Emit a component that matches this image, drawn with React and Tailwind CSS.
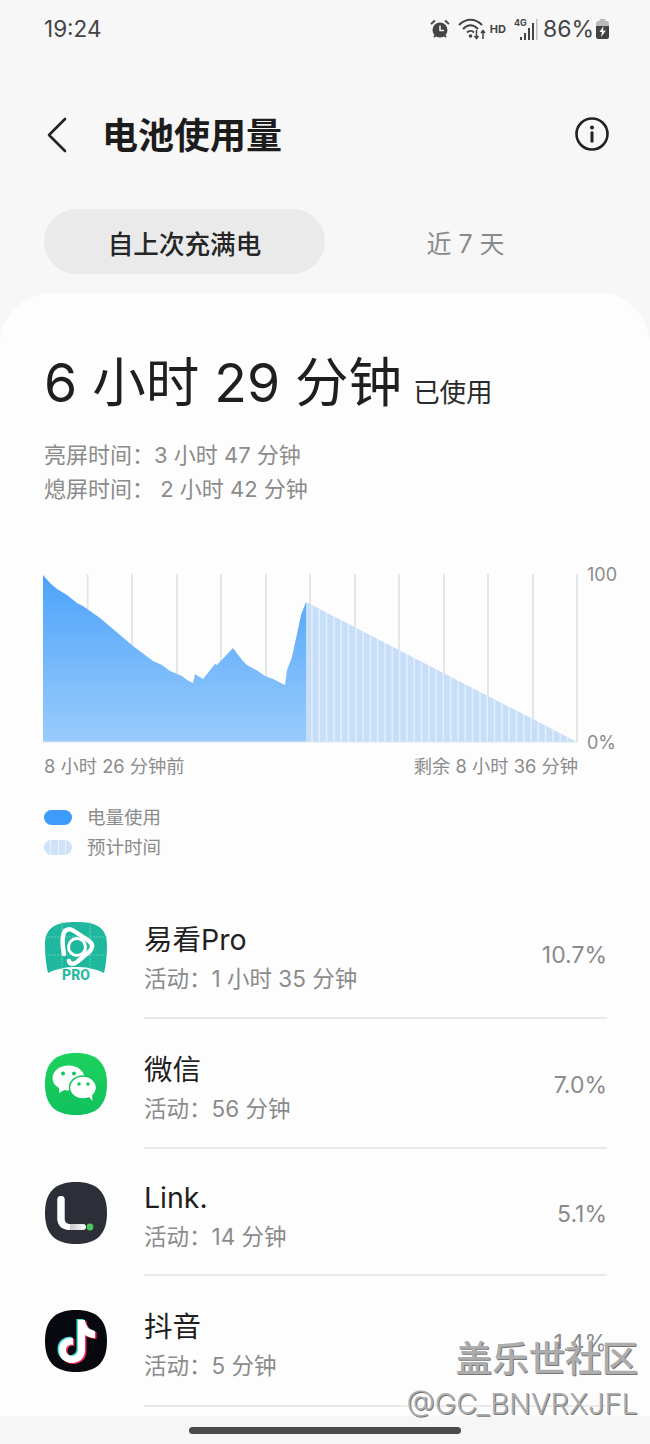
import React from "react";

const font = "font-['Inter','Noto_Sans_CJK_SC',sans-serif]";

const usedPoints =
  "43,742 43,575 50,583 57,589 67,595 77,603 83,606 100,618 133,646 153,661 162,665 170,671 182,676 187,680 193,683 195,674 203,679 215,664 217,665 233,648 242,660 247,665 258,671 265,676 273,679 285,685 287,670 292,657 301,615 306,602 306,742";

const gridXs = [87.5, 132, 177, 221, 266, 310, 355, 399, 444, 488, 533, 577];
const stripeXs = Array.from({ length: 37 }, (_, i) => 312 + i * 7.3);

const Chart = () => (
  <svg width="536" height="170" viewBox="42 573 536 170" className="block shrink-0">
    <defs>
      <linearGradient id="used" x1="0" y1="0" x2="0" y2="1">
        <stop offset="0" stopColor="#4da3fb" />
        <stop offset="1" stopColor="#9accfc" />
      </linearGradient>
      <clipPath id="forecast">
        <polygon points="306,602 577,742 306,742" />
      </clipPath>
    </defs>
    {gridXs.map((x) => (
      <line key={x} x1={x} x2={x} y1="574" y2="742" stroke="#e6e6e6" strokeWidth="2" />
    ))}
    <polygon points="306,602 577,742 306,742" fill="#c4dcf9" fillOpacity="0.95" />
    <g clipPath="url(#forecast)">
      {stripeXs.map((x) => (
        <line key={x} x1={x} x2={x} y1="600" y2="742" stroke="#e2eefc" strokeWidth="1.6" />
      ))}
    </g>
    <polygon points={usedPoints} fill="url(#used)" />
    <line x1="43" x2="577" y1="742" y2="742" stroke="#dbe8f6" strokeWidth="1" />
  </svg>
);

const Squircle = ({ fill }) => (
  <path d="M32 1C53 1 63 11 63 32C63 53 53 63 32 63C11 63 1 53 1 32C1 11 11 1 32 1Z" fill={fill} />
);

const YikanIcon = () => (
  <svg width="64" height="64" viewBox="0 0 64 64">
    <path d="M32 1C52 1 63 6 63 24C63 34 62 44 60 52C50 47 41 46 32 46C23 46 14 47 4 52C2 44 1 34 1 24C1 6 12 1 32 1Z" fill="#1fb89e" />
    <path d="M1 16H63M1 34H63M18 1V48M46 1V48" stroke="#5fd0bc" strokeWidth="1" strokeDasharray="2 1" fill="none" />
    <path d="M21 10C24 7 27 8 30 10L45 20C49 23 49 27 46 30L33 41C29 44 26 43 25 40" fill="none" stroke="#fff" strokeWidth="4.5" strokeLinecap="round" />
    <path d="M21 10C18 14 18 24 20 33" fill="none" stroke="#fff" strokeWidth="4.5" strokeLinecap="round" />
    <circle cx="33" cy="26" r="8.5" fill="none" stroke="#fff" strokeWidth="3" />
    <path d="M30 21L39 26L30 31Z" fill="#1fb89e" />
    <text x="32" y="59" textAnchor="middle" fontSize="14" fontWeight="800" fill="#25b9a0" fontFamily="Roboto, sans-serif">PRO</text>
  </svg>
);

const WechatIcon = () => (
  <svg width="64" height="64" viewBox="0 0 64 64">
    <defs>
      <linearGradient id="wx" x1="0" y1="0" x2="0" y2="1">
        <stop offset="0" stopColor="#1dd25f" />
        <stop offset="1" stopColor="#0fc15b" />
      </linearGradient>
    </defs>
    <Squircle fill="url(#wx)" />
    <ellipse cx="24.500" cy="26" rx="16" ry="12.500" fill="#fff" />
    <path d="M15 34L15 41L22 37Z" fill="#fff" />
    <ellipse cx="39" cy="35.500" rx="13.500" ry="11.500" fill="#fff" stroke="#14c75c" strokeWidth="1.500" />
    <path d="M44 44L48.500 49L48 41Z" fill="#fff" />
    <circle cx="19" cy="21.500" r="2" fill="#14c75c" />
    <circle cx="30" cy="21.500" r="2" fill="#14c75c" />
    <circle cx="35" cy="32" r="1.800" fill="#14c75c" />
    <circle cx="44" cy="32" r="1.800" fill="#14c75c" />
  </svg>
);

const LinkIcon = () => (
  <svg width="64" height="64" viewBox="0 0 64 64">
    <defs>
      <linearGradient id="lk" x1="0" y1="0" x2="1" y2="0">
        <stop offset="0" stopColor="#f4f4f4" />
        <stop offset="0.45" stopColor="#c9c9c9" />
        <stop offset="1" stopColor="#ffffff" />
      </linearGradient>
    </defs>
    <Squircle fill="#2c2f38" />
    <path d="M17 15C19 15 20.500 16 20.500 18V38C20.500 41 23 43 26 43H39C41 43 42 44 42 46C42 48 41 49 39 49H26C19 49 13.500 45 13.500 38V18C13.500 16 15 15 17 15Z" fill="url(#lk)" />
    <path d="M13.500 18C13.500 16 15 15 17 15C19 15 20.500 16 20.500 18V38C20.500 41 23 43 26 43V49C19 49 13.500 45 13.500 38Z" fill="#fff" />
    <circle cx="46" cy="46" r="3.400" fill="#4cc65d" />
  </svg>
);

const DouyinIcon = () => {
  const note = "M34 11H41C41.5 17 45 21 51 22V29C46 29 43 27.5 41 26V41C41 49 35 54 28 54C20 54 15 48 15 41C15 33 22 28 29 29V36C25 35 22 37.5 22 41C22 44.5 25 47 28 47C31.500 47 34 44.500 34 41Z";
  return (
    <svg width="64" height="64" viewBox="0 0 64 64">
      <Squircle fill="#08090f" />
      <path d={note} fill="#3fe3e0" transform="translate(-1.500 -1)" />
      <path d={note} fill="#f4305a" transform="translate(1.500 1)" />
      <path d={note} fill="#fff" />
    </svg>
  );
};

const apps = [
  { name: "易看Pro", use: "活动：1 小时 35 分钟", pct: "10.7%", icon: <YikanIcon />, h: "h-[130px]", top: "pt-[32px]" },
  { name: "微信", use: "活动：56 分钟", pct: "7.0%", icon: <WechatIcon />, h: "h-[130px]", top: "pt-[33px]" },
  { name: "Link.", use: "活动：14 分钟", pct: "5.1%", icon: <LinkIcon />, h: "h-[127px]", top: "pt-[32px]" },
  { name: "抖音", use: "活动：5 分钟", pct: "1.4%", icon: <DouyinIcon />, h: "h-[131px]", top: "pt-[33px]" },
];

const AppRow = ({ app }) => (
  <div className={`flex pl-[44px] pr-[43px] ${app.h}`}>
    <div className={`w-[100px] shrink-0 ${app.top}`}>{app.icon}</div>
    <div className="flex flex-1 items-center justify-between border-b-2 border-[#e9e9e9] pt-[11px]">
      <div className="flex flex-col">
        <span className="text-[28.500px] leading-[39px] text-[#1f1f1f]">{app.name}</span>
        <span className="text-[22.500px] leading-[39px] text-[#8b8b8b]">{app.use}</span>
      </div>
      <span className="mb-[6px] text-[23px] text-[#8b8b8b]">{app.pct}</span>
    </div>
  </div>
);

const StatusIcons = () => (
  <div className="flex items-center text-[#444]">
    <svg width="20" height="20" viewBox="0 0 20 20" className="mr-[8px]">
      <circle cx="10" cy="11" r="7.500" fill="#444" />
      <path d="M10 6.500V11.500H14" stroke="#f7f7f7" strokeWidth="1.500" fill="none" />
      <path d="M1 5L5 1.500M19 5L15 1.500M4 18L5.500 16.500M16 18L14.500 16.500" stroke="#444" strokeWidth="1.800" />
    </svg>
    <svg width="28" height="22" viewBox="0 0 28 22" fill="none" className="mr-[4px]">
      <path d="M1 7C8 0 17 0 24 7" stroke="#444" strokeWidth="2" />
      <path d="M5 11C10 6 15 6 20 11" stroke="#444" strokeWidth="2" />
      <path d="M9 14.500C11 12.500 14 12.500 16 14.500" stroke="#444" strokeWidth="2" />
      <circle cx="12.500" cy="18" r="1.800" fill="#444" />
      <path d="M18.500 12V20M16.500 18L18.500 20.500L20.500 18M25 21V13M23 15L25 12.500L27 15" stroke="#444" strokeWidth="1.500" />
    </svg>
    <span className="mr-[8px] text-[11px] font-bold leading-none text-[#444]">HD</span>
    <div className="relative mr-[5px] h-[24px] w-[24px]">
      <span className="absolute left-0 top-[1px] text-[9px] font-bold leading-none text-[#444]">4G</span>
      <svg width="24" height="24" viewBox="0 0 24 24" className="absolute left-0 top-0">
        <rect x="6" y="20" width="2" height="3" fill="#444" />
        <rect x="10" y="16" width="2" height="7" fill="#444" />
        <rect x="14" y="11" width="2" height="12" fill="#444" />
        <rect x="18" y="6" width="2" height="17" fill="#444" />
        <rect x="22" y="2" width="1.500" height="21" fill="#bdbdbd" />
      </svg>
    </div>
    <span className="mr-[2px] text-[23px] leading-none text-[#444]">86%</span>
    <svg width="13" height="20" viewBox="0 0 13 20">
      <rect x="3.500" y="0" width="6" height="3" fill="#bbb" />
      <path d="M0 4C0 3 1 2 2 2H11C12 2 13 3 13 4V7H0Z" fill="#bbb" />
      <path d="M0 7H13V18C13 19 12 20 11 20H2C1 20 0 19 0 18Z" fill="#444" />
      <path d="M7.500 7L3.500 13H6L5 18L10 11.500H7Z" fill="#f7f7f7" />
    </svg>
  </div>
);

export default function App() {
  return (
    <div className={`relative h-[1444px] w-[650px] overflow-hidden bg-[#f7f7f7] ${font}`}>
      {/* status bar */}
      <div className="flex h-[58px] items-center justify-between pl-[44px] pr-[41px]">
        <span className="text-[22.500px] leading-none text-[#444]">19:24</span>
        <StatusIcons />
      </div>

      {/* header */}
      <div className="flex h-[151px] items-start pl-[47px] pr-[41px] pt-[59px]">
        <svg width="20" height="36" viewBox="0 0 20 36" fill="none" className="shrink-0">
          <path d="M18 2L2 18L18 34" stroke="#222" strokeWidth="2.600" strokeLinecap="round" strokeLinejoin="round" />
        </svg>
        <h1 className="ml-[35px] flex-1 text-[36px] font-semibold leading-[38px] text-[#1c1c1c]">电池使用量</h1>
        <svg width="34" height="34" viewBox="0 0 34 34" fill="none" className="shrink-0">
          <circle cx="17" cy="17" r="15.500" stroke="#222" strokeWidth="2.600" />
          <circle cx="17" cy="10.500" r="2" fill="#222" />
          <rect x="15.500" y="14.500" width="3" height="11" rx="0.500" fill="#222" />
        </svg>
      </div>

      {/* tabs */}
      <div className="flex h-[65px] pl-[44px] pr-[44px]">
        <div className="flex w-[281px] items-center justify-center rounded-full bg-[#eaeaea] pt-[7px] text-[25.600px] font-medium text-[#262626]">
          自上次充满电
        </div>
        <div className="flex flex-1 items-center justify-center pt-[7px] text-[25px] text-[#8a8a8a]">近 7 天</div>
      </div>

      {/* card */}
      <div className="mt-[19px] h-[1123px] rounded-t-[52px] bg-[#fdfdfd]">
        <div className="flex items-baseline pl-[44px] pt-[52px]">
          <span className="text-[53.500px] leading-[76px] text-[#1f1f1f]">6 小时 29 分钟</span>
          <span className="ml-[11px] text-[26.500px] text-[#2b2b2b]">已使用</span>
        </div>
        <div className="mt-[17px] pl-[44px] text-[22px] leading-[34px] text-[#8b8b8b]">
          <div>亮屏时间：3 小时 47 分钟</div>
          <div>熄屏时间：&nbsp;2 小时 42 分钟</div>
        </div>

        <div className="ml-[42px] mt-[67px] flex items-stretch">
          <Chart />
          <div className="-mb-[10px] -mt-[8px] ml-[9px] flex flex-col justify-between text-[18px] leading-[20px] text-[#8b8b8b]">
            <span>100</span>
            <span>0%</span>
          </div>
        </div>

        <div className="mt-[11px] flex w-[578px] justify-between pl-[44px] text-[18.300px] leading-[24px] text-[#8b8b8b]">
          <span>8 小时 26 分钟前</span>
          <span>剩余 8 小时 36 分钟</span>
        </div>

        <div className="mt-[27px] flex flex-col gap-[5px] pl-[44px] text-[18.500px] leading-[25px] text-[#8b8b8b]">
          <div className="flex items-center gap-[15px]">
            <div className="h-[15px] w-[28px] rounded-full bg-[#3f9bfb]" />
            <span>电量使用</span>
          </div>
          <div className="flex items-center gap-[15px]">
            <div className="flex h-[15px] w-[28px] justify-evenly overflow-hidden rounded-full bg-[#cfe2fa]">
              <div className="h-full w-[1px] bg-[#eaf2fd]" />
              <div className="h-full w-[1px] bg-[#eaf2fd]" />
              <div className="h-full w-[1px] bg-[#eaf2fd]" />
            </div>
            <span>预计时间</span>
          </div>
        </div>

        <div className="mt-[29px]">
          {apps.map((app) => (
            <AppRow key={app.name} app={app} />
          ))}
        </div>
      </div>

      {/* gesture bar */}
      <div className="absolute bottom-0 left-0 flex h-[28px] w-full items-start justify-center bg-[#f6f6f6] pt-[11px]">
        <div className="h-[7px] w-[272px] rounded-full bg-[#4a4a4a]" />
      </div>

      {/* watermark */}
      <div className="absolute right-[12px] top-[1337px] flex flex-col items-end text-[#adadad] [text-shadow:1px_1px_0_#777777,-1px_-1px_0_#ffffff]">
        <span className="text-[36.500px] font-medium leading-[44px]">盖乐世社区</span>
        <span className="text-[29px] font-light leading-[46px]">@GC_BNVRXJFL</span>
      </div>
    </div>
  );
}
